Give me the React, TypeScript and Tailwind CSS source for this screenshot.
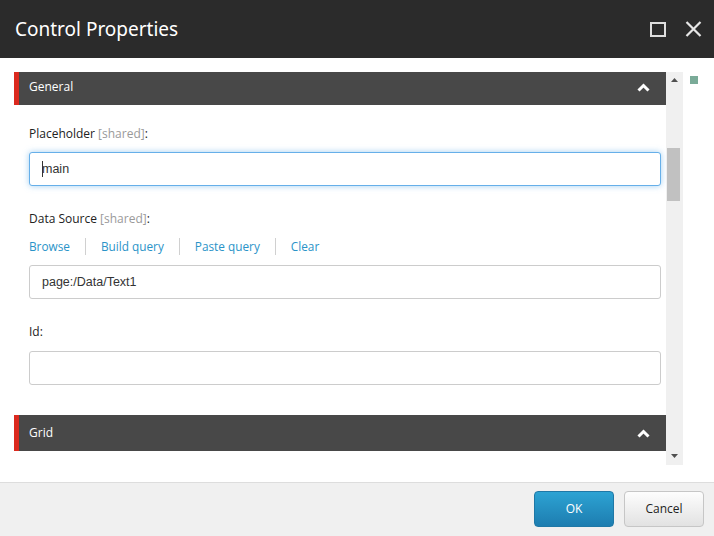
import React from "react";

const sans = { fontFamily: '"Open Sans", "Noto Sans", sans-serif' };

const ChevronUp = () => (
  <svg width="13" height="9" viewBox="0 0 13 9" className="block">
    <polyline points="1.5,7.5 6.5,2.5 11.5,7.5" fill="none" stroke="#fff" strokeWidth="3" />
  </svg>
);

const SectionHeader = ({ title }: { title: string }) => (
  <div className="flex h-[36px] items-center bg-[#484848] shrink-0">
    <div className="h-full w-[5px] bg-[#db2a1f]" />
    <span className="ml-[10px] text-[12px] text-white">{title}</span>
    <div className="ml-auto mr-[16px]">
      <ChevronUp />
    </div>
  </div>
);

const Label = ({ text, shared }: { text: string; shared?: boolean }) => (
  <div className="h-[16px] text-[12px] leading-[16px] text-[#222]">
    {text}
    {shared && <span className="text-[#9a9a9a]"> [shared]</span>}
    :
  </div>
);

const Field = ({ value, focused, caret }: { value?: string; focused?: boolean; caret?: boolean }) => (
  <div
    className={
      focused
        ? "flex h-[34px] items-center rounded-[3px] border border-[#66afe9] bg-white pl-[12px] shadow-[0_0_6px_rgba(102,175,233,0.6)]"
        : "flex h-[34px] items-center rounded-[3px] border border-[#cccccc] bg-white pl-[12px]"
    }
    style={{ fontFamily: '"Liberation Sans", Arial, sans-serif' }}
  >
    {caret && <span className="mr-[-1px] h-[16px] w-px bg-[#333]" />}
    <span className="text-[12.5px] text-[#333]">{value}</span>
  </div>
);

const links = ["Browse", "Build query", "Paste query", "Clear"];

export default function App() {
  return (
    <div className="flex h-[536px] w-[714px] flex-col overflow-hidden bg-white" style={sans}>
      {/* title bar */}
      <div className="flex h-[58px] shrink-0 items-center bg-[#2b2b2b] pl-[15px] pr-[12px]">
        <span className="text-[19px] text-white" style={{ fontFamily: '"Noto Sans", sans-serif' }}>
          Control Properties
        </span>
        <div className="ml-auto flex items-center gap-[19px]">
          <div className="h-[15px] w-[16px] border-2 border-[#dedede]" />
          <svg width="17" height="16" viewBox="0 0 17 16">
            <path d="M1.5 1 L15.5 15 M15.5 1 L1.5 15" stroke="#e6e6e6" strokeWidth="2.2" />
          </svg>
        </div>
      </div>

      {/* body */}
      <div className="flex flex-1 pl-[14px] pt-[14px]">
        <div className="h-[393px] w-[652px] overflow-hidden">
          <div className="-mt-[3px] flex flex-col">
            <SectionHeader title="General" />
            <div className="flex flex-col pl-[15px] pr-[5px] pt-[21px]">
              <Label text="Placeholder" shared />
              <div className="mt-[10px]">
                <Field value="main" focused caret />
              </div>

              <div className="mt-[25px]">
                <Label text="Data Source" shared />
              </div>
              <div className="mt-[11px] flex h-[17px] items-center text-[11.8px] text-[#2a93c8]">
                {links.map((l, i) => (
                  <React.Fragment key={l}>
                    {i > 0 && <span className="ml-[15px] mr-[15px] h-[17px] w-px bg-[#d0d0d0]" />}
                    <span>{l}</span>
                  </React.Fragment>
                ))}
              </div>
              <div className="mt-[10px]">
                <Field value="page:/Data/Text1" />
              </div>

              <div className="mt-[25px]">
                <Label text="Id" />
              </div>
              <div className="mt-[11px]">
                <Field />
              </div>
            </div>
            <div className="mt-[30px]">
              <SectionHeader title="Grid" />
            </div>
            <div className="h-[60px]" />
          </div>
        </div>

        {/* scrollbar */}
        <div className="flex h-[393px] w-[17px] flex-col items-center bg-[#f0f0f0]">
          <svg width="7" height="4" viewBox="0 0 7 4" className="mt-[6px]">
            <polygon points="0,4 3.5,0 7,4" fill="#505050" />
          </svg>
          <div className="ml-[-3px] mt-[66px] h-[53px] w-[13px] bg-[#c1c1c1]" />
          <svg width="7" height="4" viewBox="0 0 7 4" className="mt-auto mb-[7px]">
            <polygon points="0,0 7,0 3.5,4" fill="#505050" />
          </svg>
        </div>

        <div className="ml-[7px] mt-[4px] h-[8px] w-[8px] bg-[#7aab98]" />
      </div>

      {/* footer */}
      <div className="flex h-[54px] shrink-0 items-start justify-end gap-[10px] border-t border-[#dddddd] bg-[#f0f0f0] pr-[10px] pt-[8px]">
        <button className="h-[36px] w-[80px] rounded-[4px] border border-[#1f78a6] bg-gradient-to-b from-[#2da3d3] to-[#1d7db0] text-[12px] text-white">
          OK
        </button>
        <button className="h-[36px] w-[80px] rounded-[4px] border border-[#c6c6c6] bg-gradient-to-b from-[#fdfdfd] to-[#e2e2e2] text-[12px] text-[#222]">
          Cancel
        </button>
      </div>
    </div>
  );
}
